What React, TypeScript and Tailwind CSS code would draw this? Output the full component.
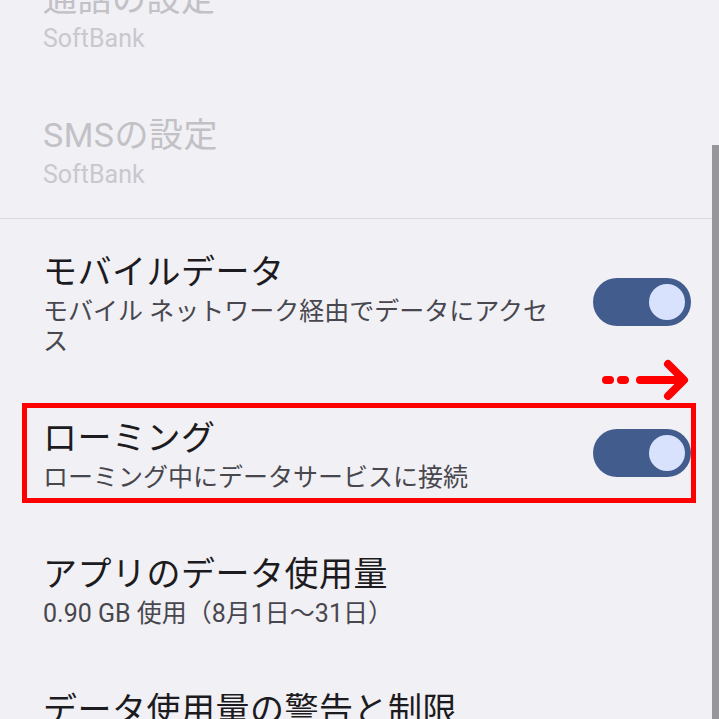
import React from 'react';

type Row = {
    title: string;
    summary: string;
    disabled?: boolean;
    toggle?: boolean;
    highlight?: boolean;
};

const rows: Row[] = [
    { title: '通話の設定', summary: 'SoftBank', disabled: true },
    { title: 'SMSの設定', summary: 'SoftBank', disabled: true },
];

const dataRows: Row[] = [
    { title: 'モバイルデータ', summary: 'モバイル ネットワーク経由でデータにアクセス', toggle: true },
    { title: 'ローミング', summary: 'ローミング中にデータサービスに接続', toggle: true, highlight: true },
    { title: 'アプリのデータ使用量', summary: '0.90 GB 使用（8月1日〜31日）' },
    { title: 'データ使用量の警告と制限', summary: '' },
];

const Toggle = () => (
    <div className="w-[98px] h-[48px] shrink-0 rounded-full bg-[#425c8d] flex items-center justify-end pr-[6px]">
        <div className="w-[36px] h-[36px] rounded-full bg-[#d9e2fd]" />
    </div>
);

const Arrow = () => (
    <svg width="92" height="42" viewBox="0 0 92 42" className="absolute left-[598px] top-[-26px]">
        <line x1="8" y1="21" x2="12" y2="21" stroke="#ff0000" strokeWidth="8" strokeLinecap="round" />
        <line x1="23" y1="21" x2="27" y2="21" stroke="#ff0000" strokeWidth="8" strokeLinecap="round" />
        <line x1="42" y1="21" x2="84" y2="21" stroke="#ff0000" strokeWidth="8" strokeLinecap="round" />
        <polyline points="70,5 86,21 70,37" fill="none" stroke="#ff0000" strokeWidth="8" strokeLinecap="round" strokeLinejoin="round" />
    </svg>
);

const SettingRow = ({ row }: { row: Row }) => (
    <div className="relative flex items-center gap-[30px] pl-[43px] pr-[28px] py-[28px]">
        <div className="flex-1 min-w-0">
            <div
                className={
                    row.disabled
                        ? 'text-[34px] leading-[50px] tracking-[0.5px] text-[#c2c1c6]'
                        : 'text-[34px] leading-[50px] tracking-[0.5px] text-[#1c1b20]'
                }
            >
                {row.title}
            </div>
            {row.summary && (
                <div
                    className={
                        row.disabled
                            ? 'text-[25px] leading-[30px] text-[#c9c8cd]'
                            : 'text-[25px] leading-[30px] text-[#48474e]'
                    }
                >
                    {row.summary}
                </div>
            )}
        </div>
        {row.toggle && <Toggle />}
        {row.highlight && (
            <>
                <div className="absolute left-[22px] right-[23px] top-[18px] bottom-[18px] border-[5px] border-[#ff0000] pointer-events-none" />
                <Arrow />
            </>
        )}
    </div>
);

export default function App() {
    return (
        <div
            className="relative w-[719px] h-[719px] overflow-hidden bg-[#f1f0f5]"
            style={{ fontFamily: 'Roboto, "Noto Sans CJK JP", sans-serif' }}
        >
            <div className="-mt-[54px]">
                {rows.map((row) => (
                    <SettingRow key={row.title} row={row} />
                ))}
                <div className="h-px bg-[#dcdbe0] mr-[7px]" />
                {dataRows.map((row) => (
                    <SettingRow key={row.title} row={row} />
                ))}
            </div>

            {/* scrollbar */}
            <div className="absolute right-0 top-[145px] bottom-0 w-[7px] bg-[#97979b]" />
        </div>
    );
}
